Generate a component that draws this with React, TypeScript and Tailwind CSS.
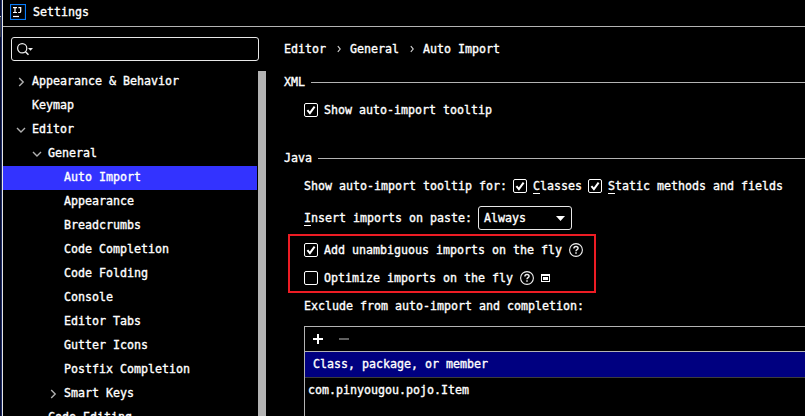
import React from "react";

const Chevron = ({ open }: { open: boolean }) => (
  <svg width="10" height="10" viewBox="0 0 10 10" fill="none" stroke="#b0b0b0" strokeWidth="1.4" className="shrink-0">
    <path d={open ? "M1 3l4 4 4-4" : "M3.2 1l4 4-4 4"} />
  </svg>
);

const Check = ({ on = true }: { on?: boolean }) => (
  <svg width="14" height="14" viewBox="0 0 14 14" fill="none" className="shrink-0">
    <rect x="0.5" y="0.5" width="13" height="13" rx="1.5" stroke="#fff" />
    {on && <path d="M3.4 7.2l2.5 3L10.6 3.6" stroke="#fff" strokeWidth="2" />}
  </svg>
);

const Help = () => (
  <svg width="14" height="14" viewBox="0 0 14 14" fill="none" stroke="#f0f0f0" className="shrink-0">
    <circle cx="7" cy="7" r="6.4" strokeWidth="1.1" />
    <path d="M4.9 5.5C4.9 4.2 5.8 3.5 7 3.5s2.1.7 2.1 1.8C9.1 6.7 7 6.7 7 8.3" strokeWidth="1.4" />
    <path d="M7 9.3v1.5" strokeWidth="1.5" />
  </svg>
);

const Separator = () => (
  <svg width="4" height="8" viewBox="0 0 4 8" fill="none" className="mr-[9px] ml-[11px] shrink-0">
    <path d="M0.8 1.2L3.2 4 0.8 6.8" stroke="#d8d8d8" strokeWidth="1.1" />
  </svg>
);

type Item = { label: string; pad: string; open?: boolean; selected?: boolean };

const tree: Item[] = [
  { label: "Appearance & Behavior", pad: "pl-[13px]", open: false },
  { label: "Keymap", pad: "pl-[13px]" },
  { label: "Editor", pad: "pl-[13px]", open: true },
  { label: "General", pad: "pl-[29px]", open: true },
  { label: "Auto Import", pad: "pl-[45px]", selected: true },
  { label: "Appearance", pad: "pl-[45px]" },
  { label: "Breadcrumbs", pad: "pl-[45px]" },
  { label: "Code Completion", pad: "pl-[45px]" },
  { label: "Code Folding", pad: "pl-[45px]" },
  { label: "Console", pad: "pl-[45px]" },
  { label: "Editor Tabs", pad: "pl-[45px]" },
  { label: "Gutter Icons", pad: "pl-[45px]" },
  { label: "Postfix Completion", pad: "pl-[45px]" },
  { label: "Smart Keys", pad: "pl-[45px]", open: false },
  { label: "Code Editing", pad: "pl-[29px]" },
];

const Section = ({ title }: { title: string }) => (
  <div className="flex h-4 items-center gap-[6px]">
    <span>{title}</span>
    <span className="mt-px h-px flex-1 bg-[#b3b3b3]" />
  </div>
);

const Mnemonic = ({ text }: { text: string }) => (
  <span>
    <span className="border-b border-white">{text[0]}</span>
    {text.slice(1)}
  </span>
);

export default function App() {
  return (
    <div className="flex h-[416px] w-[805px] overflow-hidden bg-black font-['DejaVu_Sans_Mono',monospace] text-[11.63px] leading-[14px] whitespace-pre text-white [-webkit-text-stroke:0.35px_white]">
      <div className="flex w-[2px] shrink-0 flex-col border-r border-[#1c2c66] bg-[#080c2c]">
        <span className="mt-4 h-px bg-[#c8c8c8]" />
        <span className="h-5 bg-[#34363f]" />
      </div>
      <div className="flex min-w-0 flex-1 flex-col border-l border-[#e6e6e6]">
        <header className="flex h-[27px] shrink-0 items-start border-b border-[#b3b3b3] pl-[7px]">
          <svg width="16" height="16" viewBox="0 0 16 16" fill="none" className="mt-1">
            <rect x="0.5" y="0.5" width="15" height="15" stroke="#087cfa" strokeWidth="1.2" />
            <path d="M3 3.6h4M5 3.6v5M3 8.5h4M8.4 3.6h2.3v3.6q0 1.3-1.1 1.3h-1.4" stroke="#fff" strokeWidth="1.2" />
            <path d="M3 12.5h6" stroke="#fff" strokeWidth="1.2" />
          </svg>
          <span className="mt-[5px] ml-[7px]">Settings</span>
        </header>

        <div className="flex min-h-0 flex-1">
          <aside className="flex w-[264px] shrink-0 flex-col">
            <div className="mt-[10px] ml-2 flex h-6 w-[248px] shrink-0 items-center rounded-[3px] border border-[#e8e8e8] pl-[5px]">
              <svg width="17" height="14" viewBox="0 0 17 14" fill="none">
                <circle cx="5.2" cy="6.3" r="4.6" stroke="#f0f0f0" strokeWidth="1.2" />
                <path d="M8.5 9.7l3 3" stroke="#f0f0f0" strokeWidth="1.5" />
                <path d="M11 6h5l-2.5 2.7z" fill="#f0f0f0" />
              </svg>
            </div>
            <div className="mt-[9px] flex min-h-0 flex-1 overflow-hidden">
              <nav className="w-[254px] shrink-0">
                {tree.map((t) => (
                  <div
                    key={t.label}
                    className={`flex h-6 items-center gap-[6px] pb-[2px] ${t.pad} ${t.selected ? "bg-[#3333ff]" : ""}`}
                  >
                    <span className="mt-[2px] w-[10px]">{t.open !== undefined && <Chevron open={t.open} />}</span>
                    <span>{t.label}</span>
                  </div>
                ))}
              </nav>
              <div className="mt-px ml-px w-2 bg-[#b3b3b3]" />
            </div>
          </aside>

          <main className="relative flex min-w-0 flex-1 flex-col pl-[17px]">
            <div className="mt-[15px] flex h-[14px] items-center">
              <span className="w-[42px]">Editor</span>
              <Separator />
              <span className="w-[49px]">General</span>
              <Separator />
              <span>Auto Import</span>
            </div>

            <div className="mt-[18px]">
              <Section title="XML" />
            </div>
            <div className="mt-[13px] ml-5 flex h-[14px] items-center gap-[6px]">
              <Check />
              <span>Show auto-import tooltip</span>
            </div>

            <div className="mt-[33px]">
              <Section title="Java" />
            </div>
            <div className="mt-[13px] ml-5 flex h-[14px] items-center">
              <span className="w-[209px]">Show auto-import tooltip for:</span>
              <Check />
              <span className="w-[61px] pl-[6px]"><Mnemonic text="Classes" /></span>
              <Check />
              <span className="pl-[6px]"><Mnemonic text="Static methods and fields" /></span>
            </div>
            <div className="mt-[13px] ml-5 flex h-6 items-center">
              <span className="w-[174px]"><Mnemonic text="Insert imports on paste:" /></span>
              <div className="flex h-6 w-[94px] items-center justify-between rounded-[3px] border border-[#e8e8e8] pr-[6px] pl-[5px]">
                <span>Always</span>
                <svg width="9" height="5" viewBox="0 0 9 5"><path d="M0 0h9L4.5 5z" fill="#fff" /></svg>
              </div>
            </div>
            <div className="mt-[13px] ml-5 flex h-[14px] items-center">
              <Check />
              <span className="w-[251px] pl-[6px]">Add unambiguous imports on the fly</span>
              <Help />
            </div>
            <div className="mt-[14px] ml-5 flex h-[14px] items-center">
              <Check on={false} />
              <span className="w-[202px] pl-[6px]">Optimize imports on the fly</span>
              <Help />
              <svg width="9" height="8" viewBox="0 0 9 8" className="ml-[7px]">
                <path fill="#fff" fillRule="evenodd" d="M0 0h9v8H0zM1 2v5h7V2zM2 3h5v3H2z" />
              </svg>
            </div>
            <div className="mt-[14px] ml-5 h-[14px]">Exclude from auto-import and completion:</div>

            <div className="mt-[13px] ml-5 flex min-h-0 flex-1 flex-col border-t border-l border-[#b3b3b3]">
              <div className="flex h-[25px] shrink-0 items-center gap-4 border-b border-[#b3b3b3] pl-2">
                <svg width="10" height="10" viewBox="0 0 10 10"><path d="M4 0h2v4h4v2H6v4H4V6H0V4h4z" fill="#fff" /></svg>
                <svg width="10" height="10" viewBox="0 0 10 10"><path d="M0 4h10v2H0z" fill="#606060" /></svg>
              </div>
              <div className="flex h-[26px] shrink-0 items-center border-b border-[#3c3c3c] bg-[#000080] pb-px pl-2">
                Class, package, or member
              </div>
              <div className="flex h-6 items-center pb-px pl-[3px]">com.pinyougou.pojo.Item</div>
            </div>

            <div className="pointer-events-none absolute top-[207px] left-[21px] h-[59px] w-[308px] border-2 border-[#ed1c24]" />
          </main>
        </div>
      </div>
    </div>
  );
}
